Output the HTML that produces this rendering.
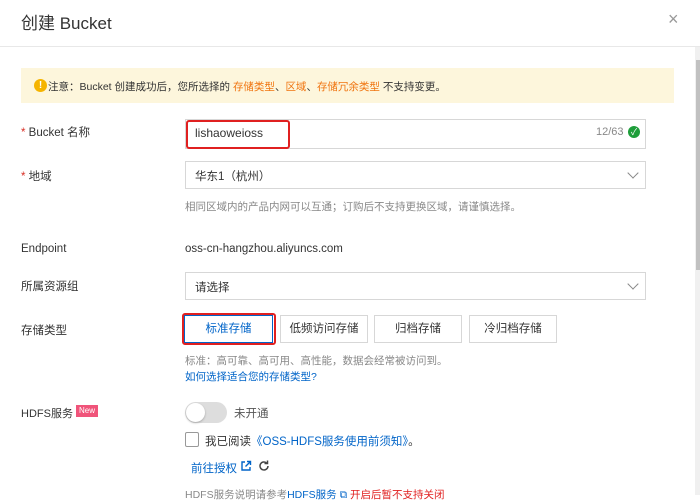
<!DOCTYPE html>
<html><head><meta charset="utf-8"><style>
*{box-sizing:border-box;margin:0;padding:0}
body{width:700px;height:495px;overflow:hidden;background:#fff;font-family:"Liberation Sans","Noto Sans CJK SC",sans-serif;font-size:12px;color:#333;position:relative}
.a{position:absolute;white-space:nowrap}
.inp{position:absolute;left:185px;width:461px;border:1px solid #d7d7d7;background:#fff}
.chev{position:absolute;right:8px;top:7px;width:8px;height:8px;border-right:1.3px solid #888;border-bottom:1.3px solid #888;transform:rotate(45deg)}
.btn{position:absolute;top:315px;height:28px;border:1px solid #d7d7d7;text-align:center;line-height:26px;color:#333;font-size:11.5px}
.lbl{position:absolute;left:21px;color:#333;font-size:11.5px}
.g{color:#888}
.bl{color:#0064c8}
</style></head><body>
<div class="a" style="left:21px;top:9px;font-size:17px;color:#333">创建 Bucket</div>
<div class="a" style="left:668px;top:9px;font-size:18px;color:#999">×</div>
<div class="a" style="left:0;top:46px;width:700px;height:1px;background:#e8e8e8"></div>
<div class="a" style="left:695px;top:47px;width:5px;height:448px;background:#f0f0f0"></div>
<div class="a" style="left:696px;top:60px;width:4px;height:210px;background:#c1c1c1"></div>
<div class="a" style="left:21px;top:68px;width:653px;height:35px;background:#fdf6dc"></div>
<div class="a" style="left:34px;top:79px;width:13px;height:13px;border-radius:50%;background:#f5b400;color:#fff;font-size:10px;font-weight:bold;text-align:center;line-height:13px">!</div>
<div class="a" style="left:48px;top:79px;font-size:10.5px">注意：Bucket 创建成功后，您所选择的 <span style="color:#f0740f">存储类型</span>、<span style="color:#f0740f">区域</span>、<span style="color:#f0740f">存储冗余类型</span> 不支持变更。</div>

<div class="lbl" style="top:124px"><span style="color:#d93026">*</span> Bucket 名称</div>
<div class="inp" style="top:119px;height:30px"></div>
<div class="a" style="left:195px;top:126px">lishaoweioss</div>
<div class="a" style="left:596px;top:126px;font-size:11px;color:#888">12/63</div>
<div class="a" style="left:628px;top:126px;width:12px;height:12px;border-radius:50%;background:#1e9e3a;color:#fff;font-size:9px;text-align:center;line-height:12px">✓</div>
<div class="a" style="left:186px;top:120px;width:104px;height:29px;border:2px solid #e02020;border-radius:3px"></div>

<div class="lbl" style="top:168px"><span style="color:#d93026">*</span> 地域</div>
<div class="inp" style="top:161px;height:28px"><div class="chev"></div></div>
<div class="a" style="left:195px;top:168px;font-size:11.5px">华东1（杭州）</div>
<div class="a g" style="left:185px;top:199px;font-size:10.5px">相同区域内的产品内网可以互通；订购后不支持更换区域，请谨慎选择。</div>

<div class="lbl" style="top:243px">Endpoint</div>
<div class="a" style="left:185px;top:243px;font-size:11.5px">oss-cn-hangzhou.aliyuncs.com</div>

<div class="lbl" style="top:278px">所属资源组</div>
<div class="inp" style="top:272px;height:28px"><div class="chev"></div></div>
<div class="a" style="left:195px;top:279px;font-size:11.5px">请选择</div>

<div class="lbl" style="top:322px">存储类型</div>
<div class="btn" style="left:184px;width:89px;border-color:#0064c8;color:#0064c8">标准存储</div>
<div class="btn" style="left:280px;width:88px">低频访问存储</div>
<div class="btn" style="left:374px;width:88px">归档存储</div>
<div class="btn" style="left:469px;width:88px">冷归档存储</div>
<div class="a" style="left:182px;top:313px;width:94px;height:32px;border:2px solid #e02020;border-radius:3px"></div>
<div class="a g" style="left:185px;top:353px;font-size:10.5px">标准：高可靠、高可用、高性能，数据会经常被访问到。</div>
<div class="a bl" style="left:185px;top:369px;font-size:10.5px">如何选择适合您的存储类型?</div>

<div class="lbl" style="top:405px;font-size:11px">HDFS服务</div>
<div class="a" style="left:76px;top:405px;background:#f0547a;color:#fff;font-size:8px;padding:0 3px;height:12px;line-height:12px">New</div>
<div class="a" style="left:185px;top:402px;width:42px;height:21px;border-radius:11px;background:#ddd"></div>
<div class="a" style="left:186px;top:403px;width:19px;height:19px;border-radius:50%;background:#fff;box-shadow:0 1px 2px rgba(0,0,0,.25)"></div>
<div class="a" style="left:234px;top:405px;color:#555;font-size:11.5px">未开通</div>
<div class="a" style="left:185px;top:432px;width:14px;height:15px;border:1px solid #999;border-radius:2px"></div>
<div class="a" style="left:205px;top:433px;font-size:11.5px">我已阅读<span class="bl">《OSS-HDFS服务使用前须知》</span>。</div>
<div class="a bl" style="left:191px;top:460px;font-size:11.5px">前往授权</div>
<svg class="a" style="left:240px;top:460px" width="12" height="12" viewBox="0 0 12 12"><path d="M5 2H2v8h8V7" fill="none" stroke="#0064c8" stroke-width="1.4"/><path d="M7 1.5h3.5V5M10.5 1.5L5.5 6.5" fill="none" stroke="#0064c8" stroke-width="1.4"/></svg>
<svg class="a" style="left:258px;top:460px" width="12" height="12" viewBox="0 0 12 12"><path d="M10 6a4 4 0 1 1-1.3-3" fill="none" stroke="#444" stroke-width="1.5"/><path d="M9.5 0.5v3h-3" fill="none" stroke="#444" stroke-width="1.5"/></svg>
<div class="a g" style="left:185px;top:487px;font-size:10.5px">HDFS服务说明请参考<span class="bl">HDFS服务 ⧉</span> <span style="color:#e02020">开启后暂不支持关闭</span></div>
</body></html>
